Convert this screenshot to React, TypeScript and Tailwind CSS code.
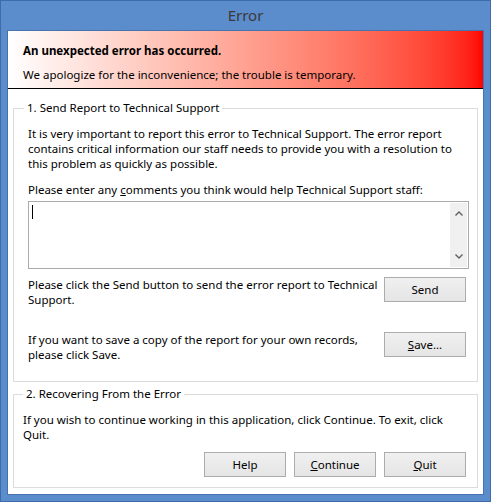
import React from 'react';

const font = { fontFamily: '"Segoe UI", "Noto Sans", sans-serif' };

function Btn({ children }: { children: React.ReactNode }) {
  return (
    <button className="w-[82px] h-[25px] border border-[#acacac] bg-linear-to-b from-[#f0f0f0] to-[#e5e5e5] text-[11.5px] leading-[15px] text-black">
      {children}
    </button>
  );
}

export default function App() {
  return (
    <div className="w-[491px] h-[502px] border border-[#3d6ca8] bg-[#5b8ccb] flex flex-col text-black" style={font}>
      <div className="h-[29px] flex items-center justify-center text-[15px] text-[#3a3a3a]">Error</div>
      <div className="flex-1 mx-[6px] mb-[6px] border border-[#4673ad] bg-white flex flex-col text-[11.5px] leading-[15px]">
        <div className="h-[58px] border-b border-black bg-linear-to-r from-white to-[#ff0000] pl-[15px] pt-[12px]">
          <div className="font-bold">An unexpected error has occurred.</div>
          <div className="mt-[9px]">We apologize for the inconvenience; the trouble is temporary.</div>
        </div>

        <fieldset className="mt-[11px] mx-[5px] border border-[#dcdcdc] pl-[14px] pr-[8px] pb-[19px]">
          <legend className="-ml-[4px] px-[3px] leading-[16px]">1. Send Report to Technical Support</legend>
          <p className="mt-[10px]">
            It is very important to report this error to Technical Support. The error report contains critical information our staff needs to provide you with a resolution to this problem as quickly as possible.
          </p>
          <p className="mt-[11px]">
            Please enter any <span className="underline">c</span>omments you think would help Technical Support staff:
          </p>
          <div className="mt-[4px] h-[68px] border border-[#ababab] flex">
            <div className="flex-1 pl-[3px] pt-[3px]">
              <div className="w-px h-[14px] bg-black" />
            </div>
            <div className="w-[17px] m-px bg-[#f0f0f0] flex flex-col items-center justify-between py-[8px]">
              <svg width="8" height="5" viewBox="0 0 8 5"><path d="M0.5 4.5 L4 1 L7.5 4.5" fill="none" stroke="#606060" strokeWidth="1.4" /></svg>
              <svg width="8" height="5" viewBox="0 0 8 5"><path d="M0.5 0.5 L4 4 L7.5 0.5" fill="none" stroke="#606060" strokeWidth="1.4" /></svg>
            </div>
          </div>
          <div className="mt-[8px] flex justify-between items-start pr-[3px]">
            <p className="w-[350px]">Please click the Send button to send the error report to Technical Support.</p>
            <Btn>Send</Btn>
          </div>
          <div className="mt-[25px] flex justify-between items-start pr-[3px]">
            <p className="w-[350px]">If you want to save a copy of the report for your own records, please click Save.</p>
            <Btn><span className="underline">S</span>ave...</Btn>
          </div>
        </fieldset>

        <fieldset className="mt-[4px] mx-[5px] border border-[#dcdcdc] pl-[9px] pr-[11px] pb-[10px]">
          <legend className="ml-0 px-[3px] leading-[16px]">2. Recovering From the Error</legend>
          <p className="mt-[10px]">
            If you wish to continue working in this application, click Continue. To exit, click Quit.
          </p>
          <div className="mt-[10px] flex justify-end gap-[8px]">
            <Btn>Help</Btn>
            <Btn><span className="underline">C</span>ontinue</Btn>
            <Btn><span className="underline">Q</span>uit</Btn>
          </div>
        </fieldset>
      </div>
    </div>
  );
}
